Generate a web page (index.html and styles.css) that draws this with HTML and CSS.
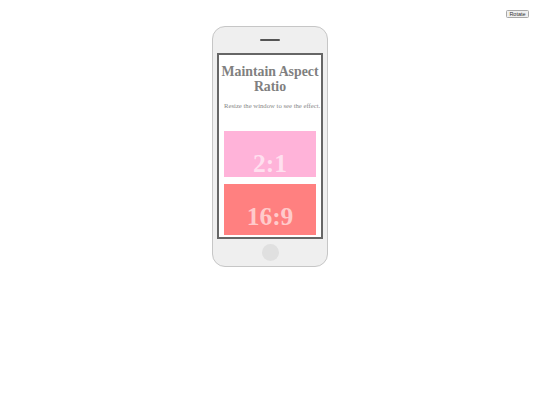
FILE: index.html
```html
<!DOCTYPE html>
<html>
<head>
<meta charset="utf-8">
<link rel="stylesheet" href="styles.css">
</head>
<body>
<div class="toolbar"><button class="rotate">Rotate</button></div>
<div class="phone">
  <div class="bezel-top"><span class="speaker"></span></div>
  <div class="screen">
    <h1 class="title">Maintain Aspect Ratio</h1>
    <p class="lead">Resize the window to see the effect.</p>
    <div class="box box-2-1"><div class="ratio-text">2:1</div></div>
    <div class="box box-16-9"><div class="ratio-text">16:9</div></div>
  </div>
  <div class="bezel-bottom"><span class="home"></span></div>
</div>
</body>
</html>
```
FILE: styles.css
```css
html, body {
  margin: 0;
  padding: 0;
  background: #ffffff;
}
body {
  width: 540px;
  height: 405px;
  padding-top: 10px;
  box-sizing: border-box;
  font-family: "Liberation Serif", "Times New Roman", serif;
}
.toolbar {
  display: flex;
  justify-content: flex-end;
  padding-right: 11px;
  height: 8px;
}
.rotate {
  font-family: "Liberation Sans", Arial, sans-serif;
  font-size: 5.5px;
  line-height: 6px;
  height: 8px;
  width: 23px;
  padding: 0;
  margin: 0;
  border: 1px solid #a8a8a8;
  border-radius: 1.5px;
  background: #efefef;
  color: #333;
}
.phone {
  width: 116px;
  margin: 8px auto 0;
  box-sizing: border-box;
  border: 1px solid #c6c6c6;
  border-radius: 13px;
  background: #efefef;
  padding: 0 4px;
  display: flex;
  flex-direction: column;
}
.bezel-top {
  height: 26px;
  display: flex;
  align-items: center;
  justify-content: center;
}
.speaker {
  width: 20px;
  height: 2px;
  background: #555;
  border-radius: 1px;
}
.bezel-bottom {
  height: 27px;
  display: flex;
  align-items: center;
  justify-content: center;
}
.home {
  width: 17px;
  height: 17px;
  border-radius: 50%;
  background: #e0e0e0;
}
.screen {
  height: 186px;
  box-sizing: border-box;
  border: 2px solid #666;
  background: #fff;
  padding: 0 5px;
  overflow: hidden;
}
.title {
  margin: 9px -4px 0;
  font-size: 13.8px;
  line-height: 15px;
  font-weight: bold;
  color: #808080;
  text-align: center;
}
.lead {
  margin: 8px 0 22px;
  font-size: 6.7px;
  color: #888;
  text-align: center;
  white-space: nowrap;
}
.box {
  width: 100%;
}
.box-2-1 {
  aspect-ratio: 2 / 1;
  background: #ffb3d9;
  margin-bottom: 6.5px;
}
.box-16-9 {
  aspect-ratio: 16 / 9;
  background: #ff8080;
}
.ratio-text {
  padding-top: 20px;
  font-size: 25.5px;
  line-height: 1;
  font-weight: bold;
  text-align: center;
  color: rgba(255, 255, 255, 0.6);
}
```
